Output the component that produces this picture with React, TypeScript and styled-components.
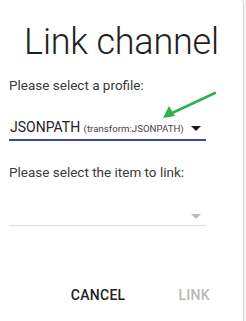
import styled, { createGlobalStyle } from "styled-components";

const GlobalStyle = createGlobalStyle`
  html, body {
    margin: 0;
    padding: 0;
    background: #f4f4f4;
  }
  body {
    font-family: Roboto, "Liberation Sans", sans-serif;
  }
`;

const Dialog = styled.div`
  width: 244px;
  height: 321px;
  box-sizing: border-box;
  background: #ffffff;
  border-right: 1px solid #d4d4d4;
  border-top-right-radius: 4px;
  position: relative;
  display: flex;
  flex-direction: column;
`;

const Title = styled.h1`
  margin: 0;
  padding-top: 21px;
  text-align: center;
  font-weight: 300;
  font-size: 36px;
  line-height: 42px;
  color: #212121;
  letter-spacing: -0.2px;
`;

const Body = styled.div`
  padding: 14px 37px 0 9px;
  display: flex;
  flex-direction: column;
`;

const Label = styled.div`
  font-size: 13.5px;
  line-height: 16px;
  color: #3a3a3a;
`;

const Select = styled.div<{ $active?: boolean }>`
  height: 26px;
  margin-top: ${(p) => (p.$active ? "22px" : "20px")};
  margin-bottom: 23px;
  box-sizing: border-box;
  display: flex;
  align-items: center;
  justify-content: space-between;
  padding: 0 5px 0 1px;
  border-bottom: ${(p) => (p.$active ? "2px solid #3949ab" : "1px solid #dcdcdc")};
`;

const Value = styled.span`
  font-size: 14px;
  color: #222;
  white-space: nowrap;
`;

const Hint = styled.span`
  font-size: 9.7px;
  color: #444;
`;

const Caret = styled.span<{ $muted?: boolean }>`
  width: 0;
  height: 0;
  border-left: 5px solid transparent;
  border-right: 5px solid transparent;
  border-top: 5px solid ${(p) => (p.$muted ? "#bdbdbd" : "#1a1a1a")};
  margin-top: ${(p) => (p.$muted ? "7px" : "2px")};
`;

const Actions = styled.div`
  margin-top: auto;
  padding: 0 33px 18px 0;
  display: flex;
  justify-content: flex-end;
  gap: 53px;
`;

const Button = styled.button<{ $disabled?: boolean }>`
  border: none;
  background: none;
  padding: 0;
  font-family: Roboto, "Liberation Sans", sans-serif;
  font-weight: 500;
  font-size: 14px;
  letter-spacing: 0.3px;
  color: ${(p) => (p.$disabled ? "#b8b8b8" : "#212121")};
`;

const Pointer = styled.svg`
  position: absolute;
  left: 158px;
  top: 88px;
`;

export default function App() {
  return (
    <>
      <GlobalStyle />
      <Dialog>
        <Title>Link channel</Title>
        <Body>
          <Label>Please select a profile:</Label>
          <Select $active>
            <Value>
              JSONPATH <Hint>(transform:JSONPATH)</Hint>
            </Value>
            <Caret />
          </Select>
          <Label>Please select the item to link:</Label>
          <Select>
            <span />
            <Caret $muted />
          </Select>
        </Body>
        <Actions>
          <Button>CANCEL</Button>
          <Button $disabled>LINK</Button>
        </Actions>
        <Pointer width="62" height="34" viewBox="0 0 62 34">
          <line x1="57" y1="5" x2="12" y2="26" stroke="#2eb34b" strokeWidth="2.5" strokeLinecap="round" />
          <polygon points="5,30 11,18 17,28" fill="#2eb34b" />
        </Pointer>
      </Dialog>
    </>
  );
}
